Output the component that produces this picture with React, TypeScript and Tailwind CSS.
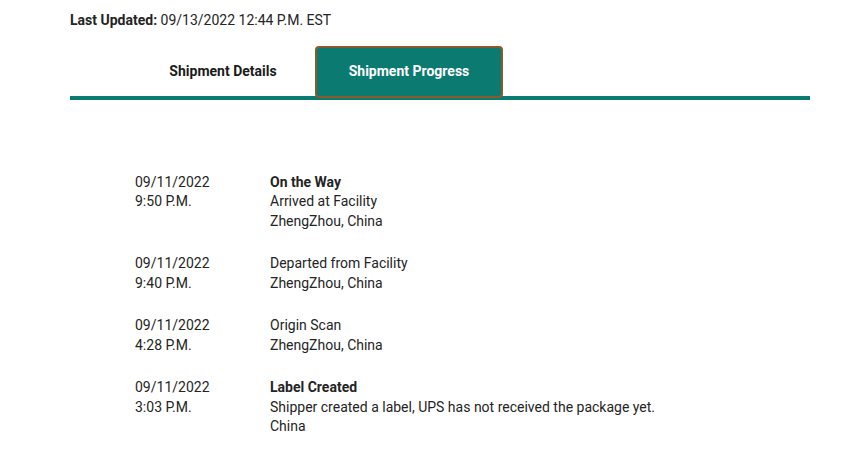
import React from 'react'

interface ProgressRow {
  date: string
  time: string
  status?: string
  lines: string[]
}

const rows: ProgressRow[] = [
  { date: '09/11/2022', time: '9:50 P.M.', status: 'On the Way', lines: ['Arrived at Facility', 'ZhengZhou, China'] },
  { date: '09/11/2022', time: '9:40 P.M.', lines: ['Departed from Facility', 'ZhengZhou, China'] },
  { date: '09/11/2022', time: '4:28 P.M.', lines: ['Origin Scan', 'ZhengZhou, China'] },
  {
    date: '09/11/2022',
    time: '3:03 P.M.',
    status: 'Label Created',
    lines: ['Shipper created a label, UPS has not received the package yet.', 'China'],
  },
]

export default function App() {
  return (
    <div className="min-h-screen w-full bg-white font-['Roboto',sans-serif] text-[14px] leading-[19.5px] text-[#242424]">
      <div className="ml-[70px] w-[740px] pt-[11px]">
        {/* Last updated */}
        <p>
          <span className="font-bold">Last Updated:</span> 09/13/2022 12:44 P.M. EST
        </p>

        {/* Tabs */}
        <div className="mt-[15px] flex h-[54px] items-stretch border-b-4 border-[#0b7a70] pl-[57px]">
          <button className="w-[188px] pt-[2px] pl-[4px] text-[14px] font-bold text-[#1a1a1a]">Shipment Details</button>
          <button className="relative -mb-[2px] w-[188px] rounded-[4px] border-2 border-[#8b5a2b] bg-[#0b7a70] text-[14px] font-bold text-white">
            Shipment Progress
          </button>
        </div>

        {/* Progress list */}
        <div className="mt-[73px] flex flex-col gap-[23px] pl-[65px]">
          {rows.map((r, i) => (
            <div key={i} className="flex">
              <div className="w-[135px] shrink-0">
                <div>{r.date}</div>
                <div>{r.time}</div>
              </div>
              <div>
                {r.status && <div className="font-bold">{r.status}</div>}
                {r.lines.map((l, j) => (
                  <div key={j}>{l}</div>
                ))}
              </div>
            </div>
          ))}
        </div>
      </div>
    </div>
  )
}
